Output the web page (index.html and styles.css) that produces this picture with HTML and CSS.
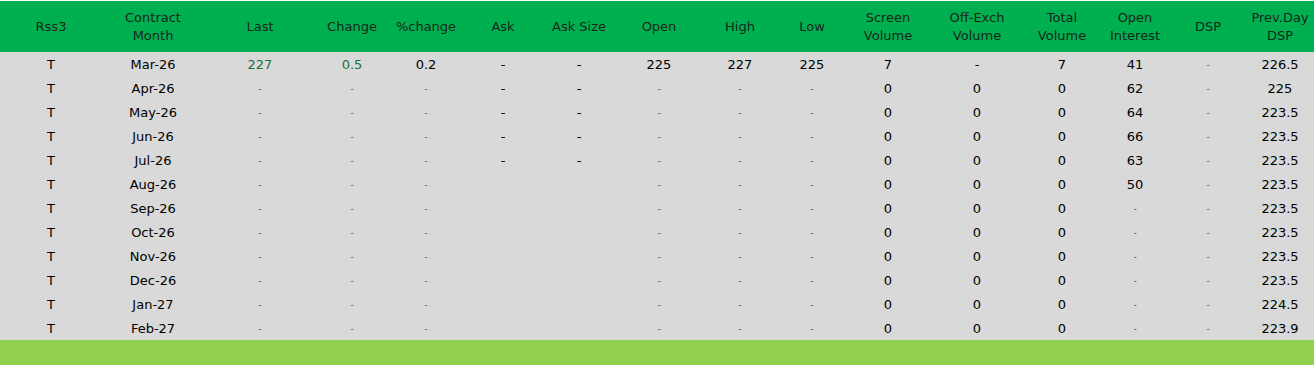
FILE: index.html
```html
<!DOCTYPE html>
<html>
<head>
<meta charset="utf-8">
<link rel="stylesheet" href="styles.css">
</head>
<body>
<table class="quotes">
  <colgroup>
    <col style="width:102px"><col style="width:102px"><col style="width:112px"><col style="width:72px">
    <col style="width:76px"><col style="width:78px"><col style="width:74px"><col style="width:86px">
    <col style="width:76px"><col style="width:68px"><col style="width:84px"><col style="width:94px">
    <col style="width:76px"><col style="width:70px"><col style="width:76px"><col style="width:68px">
  </colgroup>
  <thead>
    <tr>
      <th>Rss3</th><th>Contract<br>Month</th><th>Last</th><th>Change</th><th>%change</th><th>Ask</th><th>Ask Size</th><th>Open</th><th>High</th><th>Low</th><th>Screen<br>Volume</th><th>Off-Exch<br>Volume</th><th>Total<br>Volume</th><th>Open<br>Interest</th><th>DSP</th><th>Prev.Day<br>DSP</th>
    </tr>
  </thead>
  <tbody>
    <tr><td>T</td><td>Mar-26</td><td class="up">227</td><td class="up">0.5</td><td>0.2</td><td>-</td><td>-</td><td>225</td><td>227</td><td>225</td><td>7</td><td>-</td><td>7</td><td>41</td><td class="na">-</td><td>226.5</td></tr>
    <tr><td>T</td><td>Apr-26</td><td class="na">-</td><td class="na">-</td><td class="na">-</td><td>-</td><td>-</td><td class="na">-</td><td class="na">-</td><td class="na">-</td><td>0</td><td>0</td><td>0</td><td>62</td><td class="na">-</td><td>225</td></tr>
    <tr><td>T</td><td>May-26</td><td class="na">-</td><td class="na">-</td><td class="na">-</td><td>-</td><td>-</td><td class="na">-</td><td class="na">-</td><td class="na">-</td><td>0</td><td>0</td><td>0</td><td>64</td><td class="na">-</td><td>223.5</td></tr>
    <tr><td>T</td><td>Jun-26</td><td class="na">-</td><td class="na">-</td><td class="na">-</td><td>-</td><td>-</td><td class="na">-</td><td class="na">-</td><td class="na">-</td><td>0</td><td>0</td><td>0</td><td>66</td><td class="na">-</td><td>223.5</td></tr>
    <tr><td>T</td><td>Jul-26</td><td class="na">-</td><td class="na">-</td><td class="na">-</td><td>-</td><td>-</td><td class="na">-</td><td class="na">-</td><td class="na">-</td><td>0</td><td>0</td><td>0</td><td>63</td><td class="na">-</td><td>223.5</td></tr>
    <tr><td>T</td><td>Aug-26</td><td class="na">-</td><td class="na">-</td><td class="na">-</td><td></td><td></td><td class="na">-</td><td class="na">-</td><td class="na">-</td><td>0</td><td>0</td><td>0</td><td>50</td><td class="na">-</td><td>223.5</td></tr>
    <tr><td>T</td><td>Sep-26</td><td class="na">-</td><td class="na">-</td><td class="na">-</td><td></td><td></td><td class="na">-</td><td class="na">-</td><td class="na">-</td><td>0</td><td>0</td><td>0</td><td class="na">-</td><td class="na">-</td><td>223.5</td></tr>
    <tr><td>T</td><td>Oct-26</td><td class="na">-</td><td class="na">-</td><td class="na">-</td><td></td><td></td><td class="na">-</td><td class="na">-</td><td class="na">-</td><td>0</td><td>0</td><td>0</td><td class="na">-</td><td class="na">-</td><td>223.5</td></tr>
    <tr><td>T</td><td>Nov-26</td><td class="na">-</td><td class="na">-</td><td class="na">-</td><td></td><td></td><td class="na">-</td><td class="na">-</td><td class="na">-</td><td>0</td><td>0</td><td>0</td><td class="na">-</td><td class="na">-</td><td>223.5</td></tr>
    <tr><td>T</td><td>Dec-26</td><td class="na">-</td><td class="na">-</td><td class="na">-</td><td></td><td></td><td class="na">-</td><td class="na">-</td><td class="na">-</td><td>0</td><td>0</td><td>0</td><td class="na">-</td><td class="na">-</td><td>223.5</td></tr>
    <tr><td>T</td><td>Jan-27</td><td class="na">-</td><td class="na">-</td><td class="na">-</td><td></td><td></td><td class="na">-</td><td class="na">-</td><td class="na">-</td><td>0</td><td>0</td><td>0</td><td class="na">-</td><td class="na">-</td><td>224.5</td></tr>
    <tr><td>T</td><td>Feb-27</td><td class="na">-</td><td class="na">-</td><td class="na">-</td><td></td><td></td><td class="na">-</td><td class="na">-</td><td class="na">-</td><td>0</td><td>0</td><td>0</td><td class="na">-</td><td class="na">-</td><td>223.9</td></tr>
  </tbody>
  <tfoot>
    <tr><td colspan="16"></td></tr>
  </tfoot>
</table>
</body>
</html>
```
FILE: styles.css
```css
html, body {
  margin: 0;
  padding: 0;
  background: #ffffff;
}
body {
  padding-top: 1px;
  font-family: "DejaVu Sans", "Liberation Sans", sans-serif;
  font-size: 13px;
  color: #000;
}
.quotes {
  width: 1314px;
  table-layout: fixed;
  border-collapse: collapse;
  border-spacing: 0;
}
.quotes th {
  background: #00b050;
  color: #17261a;
  font-weight: normal;
  font-size: 13px;
  line-height: 18px;
  height: 51px;
  padding: 0;
  text-align: center;
  vertical-align: middle;
}
.quotes td {
  background: #d9d9d9;
  height: 22px;
  padding: 2px 0 0;
  text-align: center;
  vertical-align: middle;
  line-height: 16px;
  white-space: nowrap;
}
.quotes td.up {
  color: #1f6e3b;
}
.quotes td.na {
  font-size: 9px;
  color: #555;
}
.quotes tfoot td {
  background: #92d050;
  height: 25px;
  padding: 0;
}
```
